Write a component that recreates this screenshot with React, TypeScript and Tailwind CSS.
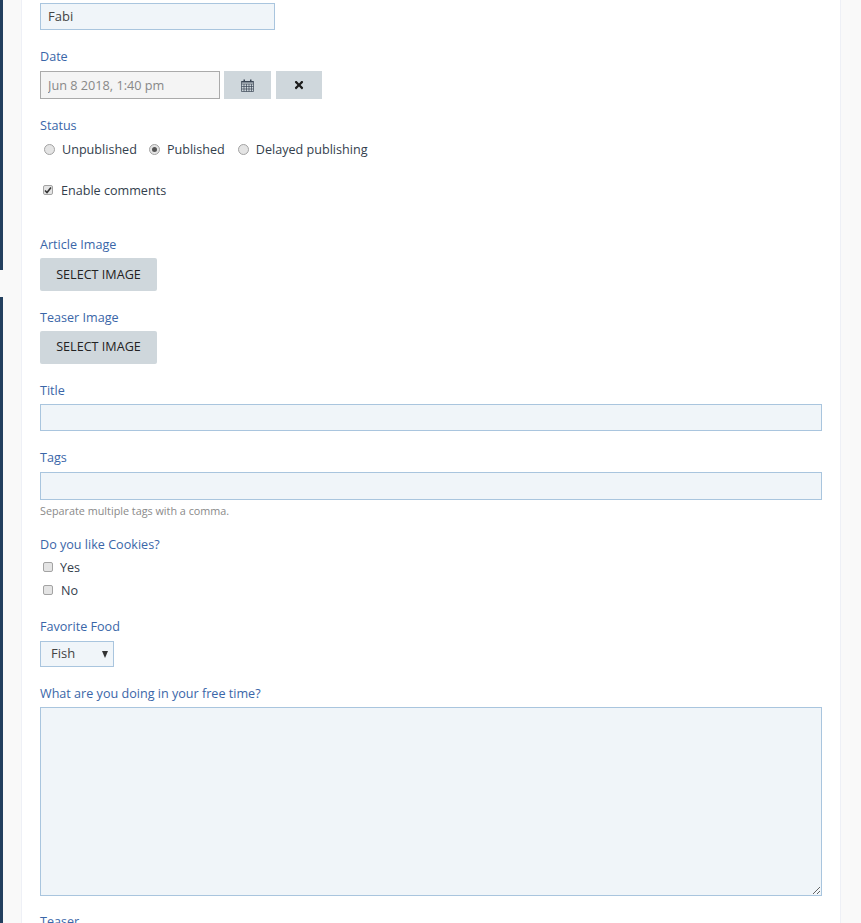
import { FaTimes } from "react-icons/fa";

const labelCls = "block h-[18px] pt-px text-[12.6px] leading-[18px] text-[#3a66a8]";
const inputCls = "block h-[27px] w-full border border-[#a9c5de] bg-[#f0f5f9] px-[7px] text-[13px] text-[#444] outline-none";
const btnCls = "flex h-[33px] w-[117px] items-center justify-center rounded-[2px] bg-[#cfd7dc] text-[12.6px] text-[#222]";

function CalendarIcon() {
  return (
    <svg width="13" height="13" viewBox="0 0 13 13" className="text-[#3a4654]">
      <path
        fill="none"
        stroke="currentColor"
        strokeWidth="0.7"
        d="M.5 2.5h12v10H.5zM.5 5h12M.5 7.5h12M.5 10h12M3 5v7.5M5.5 5v7.5M8 5v7.5M10.5 5v7.5"
      />
      <path fill="currentColor" d="M.5 2h12v1.6H.5zM2.5 .5h1.5v2.5H2.5zM9 .5h1.5v2.5H9z" />
    </svg>
  );
}

function Radio({ checked, label, className }: { checked?: boolean; label: string; className?: string }) {
  return (
    <label className={`flex h-[18px] items-center ${className ?? ""}`}>
      <span className="flex h-[11px] w-[11px] items-center justify-center rounded-full border border-[#a3a3a3] bg-[#e4e4e4]">
        {checked && <span className="h-[5px] w-[5px] rounded-full bg-[#555]" />}
      </span>
      <span className="ml-[7px] h-[18px] pt-px text-[12.6px] leading-[18px] text-[#33404d]">{label}</span>
    </label>
  );
}

function Checkbox({ checked, label, gap }: { checked?: boolean; label: string; gap: string }) {
  return (
    <label className="ml-[3px] flex h-[18px] items-center">
      <span className="flex h-[10px] w-[10px] items-center justify-center rounded-[2px] border border-[#a3a3a3] bg-[#e4e4e4]">
        {checked && (
          <svg width="8" height="8" viewBox="0 0 8 8">
            <path d="M1 4.5 3 6.5 7 1.5" fill="none" stroke="#333" strokeWidth="1.6" />
          </svg>
        )}
      </span>
      <span className={`${gap} h-[18px] pt-px text-[12.6px] leading-[18px] text-[#33404d]`}>{label}</span>
    </label>
  );
}

export default function App() {
  return (
    <div className="h-[923px] overflow-hidden bg-[#f9f9f9] font-['Open_Sans',sans-serif]">
      <div className="flex h-full">
        <div className="flex w-[3px] flex-col">
          <div className="h-[270px] bg-[#23405f]" />
          <div className="h-[27px]" />
          <div className="flex-1 bg-[#23405f]" />
        </div>
        <main className="ml-[18px] h-full w-[820px] border-x border-[#eef0f6] bg-white px-[18px] pt-[3px]">
          <input readOnly value="Fabi" className={`${inputCls} !w-[235px] pb-[2px]`} />

          <label className={`${labelCls} mt-[17px]`}>Date</label>
          <div className="mt-[6px] flex">
            <input
              readOnly
              value="Jun 8 2018, 1:40 pm"
              className="h-[28px] w-[180px] border border-[#aaa] bg-[#f4f4f4] px-[7px] text-[12.7px] text-[#888] outline-none"
            />
            <button className="ml-[4px] flex h-[28px] w-[47px] items-center justify-center bg-[#cfd7dc]">
              <CalendarIcon />
            </button>
            <button className="ml-[5px] flex h-[28px] w-[46px] items-center justify-center bg-[#cfd7dc] text-[12px] text-[#1c1c1c]">
              <FaTimes />
            </button>
          </div>

          <label className={`${labelCls} mt-[17px]`}>Status</label>
          <div className="mt-[6px] ml-[4px] flex">
            <Radio label="Unpublished" />
            <Radio checked label="Published" className="ml-[12px]" />
            <Radio label="Delayed publishing" className="ml-[13px]" />
          </div>

          <div className="mt-[23px]">
            <Checkbox checked label="Enable comments" gap="ml-[8px]" />
          </div>

          <label className={`${labelCls} mt-[36px]`}>Article Image</label>
          <button className={`${btnCls} mt-[5px] pt-[2px]`}>SELECT IMAGE</button>

          <label className={`${labelCls} mt-[17px]`}>Teaser Image</label>
          <button className={`${btnCls} mt-[5px]`}>SELECT IMAGE</button>

          <label className={`${labelCls} mt-[17px]`}>Title</label>
          <input readOnly className={`${inputCls} mt-[5px]`} />

          <label className={`${labelCls} mt-[17px]`}>Tags</label>
          <input readOnly className={`${inputCls} mt-[6px] !h-[28px]`} />
          <p className="mt-[3px] text-[10.8px] leading-[15px] text-[#8a8a8a]">Separate multiple tags with a comma.</p>

          <label className={`${labelCls} mt-[17px]`}>Do you like Cookies?</label>
          <div className="mt-[5px] flex flex-col gap-[5px]">
            <Checkbox label="Yes" gap="ml-[7px]" />
            <Checkbox label="No" gap="ml-[8px]" />
          </div>

          <label className={`${labelCls} mt-[18px]`}>Favorite Food</label>
          <div className="relative mt-[6px] flex h-[26px] w-[74px] items-center border border-[#a9c5de] bg-[#f0f5f9] pl-[10px] text-[13px] text-[#444]">
            <span>Fish</span>
            <span className="absolute right-[5px] top-[9px] h-0 w-0 border-x-[3.5px] border-t-[7px] border-x-transparent border-t-[#333]" />
          </div>

          <label className={`${labelCls} mt-[17px]`}>What are you doing in your free time?</label>
          <textarea readOnly className="mt-[5px] block h-[189px] w-full border border-[#a9c5de] bg-[#f0f5f9] outline-none" />

          <label className={`${labelCls} mt-[16px]`}>Teaser</label>
        </main>
      </div>
    </div>
  );
}
